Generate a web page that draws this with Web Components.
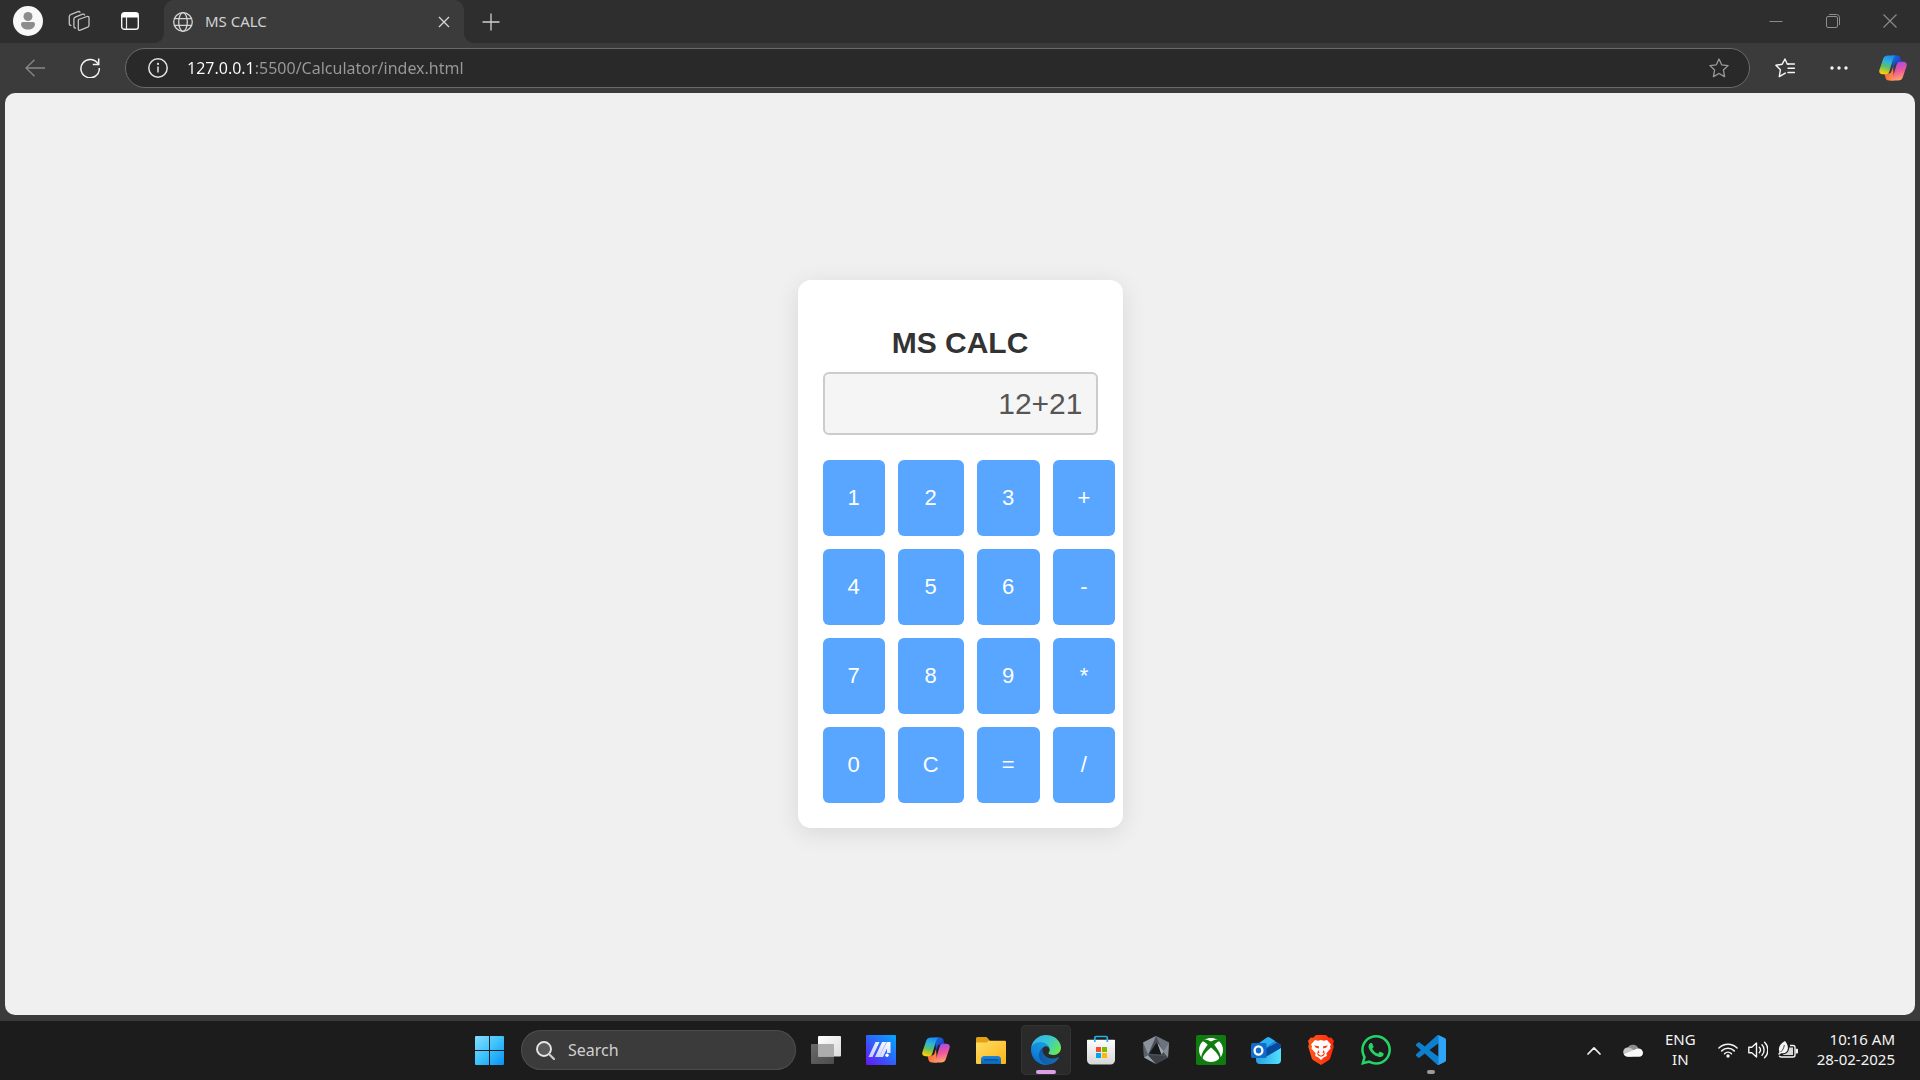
<!DOCTYPE html>
<html lang="en">
<head>
<meta charset="utf-8">
<meta name="viewport" content="width=device-width, initial-scale=1">
<title>MS CALC</title>
<style>
  html, body { margin: 0; background: #1c1c1c; }
  body { font-family: "Noto Sans", "Open Sans", sans-serif; font-size: 15px; }
</style>
</head>
<body>
<desktop-screen>
  <tab-strip slot="tabs"></tab-strip>
  <tool-bar slot="toolbar" host="127.0.0.1" path=":5500/Calculator/index.html"></tool-bar>
  <calc-app slot="page" heading="MS CALC" value="12+21"></calc-app>
  <task-bar slot="taskbar"></task-bar>
</desktop-screen>

<script>
const COPILOT = `
  <defs>
    <linearGradient id="l" x1=".6" y1="0" x2=".35" y2="1"><stop offset="0" stop-color="#1a8df0"/><stop offset=".35" stop-color="#2fb4d8"/><stop offset=".62" stop-color="#5fbf6a"/><stop offset="1" stop-color="#ffd000"/></linearGradient>
    <linearGradient id="r" x1=".6" y1="1" x2=".35" y2="0"><stop offset="0" stop-color="#a04af0"/><stop offset=".5" stop-color="#f0569a"/><stop offset="1" stop-color="#ffad60"/></linearGradient>
    <linearGradient id="b" x1="0" y1="0" x2="1" y2="1"><stop offset="0" stop-color="#1a6fe0"/><stop offset="1" stop-color="#1530b8"/></linearGradient>
    <linearGradient id="o" x1="0" y1="0" x2="1" y2="1"><stop offset="0" stop-color="#f0503c"/><stop offset="1" stop-color="#ff9a4a"/></linearGradient>
  </defs>
  <path fill="url(#b)" d="M13 .5h5.200c1.800 0 2.800 1 3.300 2.800l1.200 4.200h-4.200c-1.500 0-2.500.8-3 2.200L14 14z"/>
  <path fill="url(#o)" d="M15 25.500H9.800c-1.800 0-2.800-1-3.300-2.800l-1.200-4.200h4.200c1.500 0 2.500-.8 3-2.200L14 12z"/>
  <path fill="url(#l)" d="M9 .5h8.500c-1.800.2-2.700 1.200-3.200 2.800L10.500 16c-.7 2.200-1.600 3.200-3.700 3.200H3.500C.8 19.200-.2 17.500.4 15L4.200 3.800C5 1.500 6.500.5 9 .5z"/>
  <path fill="url(#r)" transform="rotate(180 14 13)" d="M9 .5h8.500c-1.800.2-2.700 1.200-3.200 2.800L10.500 16c-.7 2.200-1.600 3.200-3.700 3.200H3.500C.8 19.200-.2 17.500.4 15L4.200 3.800C5 1.500 6.500.5 9 .5z"/>`;

/* name: [width, height, viewBox, markup] */
const ICONS = {
  avatar: [30, 30, '0 0 30 30', `<circle cx="15" cy="15" r="15" fill="#f8f8f8"/><circle cx="15" cy="10.500" r="4.500" fill="#8c8c8c"/><path d="M10 16h10a2 2 0 0 1 2 2c0 3.500-3 5.500-7 5.500s-7-2-7-5.500a2 2 0 0 1 2-2z" fill="#8c8c8c"/>`],
  workspaces: [22, 22, '0 0 22 22', `<g fill="none" stroke="#c4c4c4" stroke-width="1.300" stroke-linejoin="round" stroke-linecap="round"><path d="M10.500 9.500l8.500-3c1.200-.4 2 .2 2 1.300v7.400c0 1-.4 1.600-1.300 2l-7.400 3c-1.200.4-2-.2-2-1.300v-7.400c0-1 0-1.500.2-2z"/><path d="M7.500 18c-1 0-1.600-.6-1.600-1.600V9.200c0-1 .4-1.600 1.300-2l7.400-3c1-.4 1.700 0 2 .8"/><path d="M3 15.300c-1 0-1.700-.5-1.700-1.600V6.700c0-1 .4-1.700 1.300-2l7.400-3c1-.4 1.600-.1 2 .6"/></g>`],
  tabmenu: [18, 18, '0 0 18 18', `<rect x=".7" y=".7" width="16.600" height="16.600" rx="2.600" fill="none" stroke="#f4f4f4" stroke-width="1.400"/><path d="M1 5.500V3a2.300 2.300 0 0 1 2.300-2.300h11.400A2.300 2.300 0 0 1 17 3v2.500z" fill="#fff"/><path d="M5.500 5v12" stroke="#e8e8e8" stroke-width="1.200"/>`],
  globe: [20, 20, '0 0 20 20', `<g fill="none" stroke="#d4d4d4" stroke-width="1.300"><circle cx="10" cy="10" r="9.300"/><ellipse cx="10" cy="10" rx="4.300" ry="9.300"/><path d="M1.500 6.700h17M1.500 13.300h17"/></g>`],
  x: [12, 12, '0 0 12 12', `<path d="M1 1l10 10M11 1L1 11" stroke="#d8d8d8" stroke-width="1.300" fill="none"/>`],
  plus: [18, 18, '0 0 18 18', `<path d="M9 .5v17M.5 9h17" stroke="#cfcfcf" stroke-width="1.300" fill="none"/>`],
  min: [14, 14, '0 0 14 14', `<path d="M.5 7.500h13" stroke="#8a8a8a"/>`],
  restore: [14, 14, '0 0 14 14', `<g fill="none" stroke="#8e8e8e"><rect x=".5" y="2.500" width="11" height="11" rx="1.500"/><path d="M3 .5h7.500a3 3 0 0 1 3 3V11"/></g>`],
  close: [14, 14, '0 0 14 14', `<path d="M.5 .5l13 13M13.500 .5l-13 13" stroke="#8e8e8e" stroke-width="1.100" fill="none"/>`],
  back: [20, 18, '0 0 20 18', `<path d="M9.500 .7L1 9l8.500 8.300M1 9h19" fill="none" stroke="#888" stroke-width="1.300"/>`],
  reload: [20, 20, '0 0 20 20', `<path d="M18.200 6.200A9.200 9.200 0 1 0 19.300 10" fill="none" stroke="#f4f4f4" stroke-width="1.500"/><path d="M18.700 .5v5.900h-5.900" fill="none" stroke="#f4f4f4" stroke-width="1.500"/>`],
  info: [20, 20, '0 0 20 20', `<circle cx="10" cy="10" r="9.200" fill="none" stroke="#e4e4e4" stroke-width="1.500"/><path d="M10 8.500v6" stroke="#e4e4e4" stroke-width="1.500"/><circle cx="10" cy="5.900" r="1.100" fill="#e4e4e4"/>`],
  star: [20, 20, '0 0 20 20', `<path d="M10 1l2.700 5.800 6.400.8-4.700 4.400 1.200 6.600L10 15.500l-5.600 3.100L5.600 12 .9 7.600l6.400-.8z" fill="none" stroke="#9a9a9a" stroke-width="1.300" stroke-linejoin="round"/>`],
  favs: [20, 20, '0 0 20 20', `<g fill="none" stroke="#f6f6f6" stroke-width="1.400" stroke-linejoin="round" stroke-linecap="round"><path d="M13.500 6.200L12.200 6 10 1 7.200 6.200.9 7.300l4.500 4.400-1.100 6.900 6-3.500"/><path d="M13 6h6.500M13 10.300h6.500M13 14.500h6.500"/></g>`],
  dots: [18, 4, '0 0 18 4', `<g fill="#f4f4f4"><circle cx="2" cy="2" r="1.700"/><circle cx="9" cy="2" r="1.700"/><circle cx="16" cy="2" r="1.700"/></g>`],
  copilot: [28, 26, '0 0 28 26', COPILOT],
  windows: [29, 29, '0 0 29 29', `<defs><linearGradient id="w" x1="0" y1="0" x2="29" y2="29" gradientUnits="userSpaceOnUse"><stop offset="0" stop-color="#86dcff"/><stop offset=".5" stop-color="#3cc2fb"/><stop offset="1" stop-color="#0a90f5"/></linearGradient></defs><path fill="url(#w)" d="M1 0h13v14H0V1a1 1 0 0 1 1-1zM15 0h13a1 1 0 0 1 1 1v13H15zM0 15h14v14H1a1 1 0 0 1-1-1zM15 15h14v13a1 1 0 0 1-1 1H15z"/>`],
  search: [19, 19, '0 0 19 19', `<circle cx="8" cy="8" r="7" fill="#5a5a5a" stroke="#e6e6e6" stroke-width="1.900"/><path d="M13 13l5 5" stroke="#cfcfcf" stroke-width="2.200" stroke-linecap="round"/>`],
  taskview: [30, 28, '0 0 30 28', `<defs><linearGradient id="a" x2="1" y2="1"><stop stop-color="#6a6a6a"/><stop offset="1" stop-color="#4c4c4c"/></linearGradient><linearGradient id="c" x2="1" y2="1"><stop stop-color="#fff"/><stop offset="1" stop-color="#dcdcdc"/></linearGradient></defs><rect y="8" width="23" height="20" rx="1" fill="url(#a)"/><rect x="7" width="23" height="20.500" rx="1" fill="url(#c)"/><path d="M7 8h16v12.500H7z" fill="#adadad"/>`],
  myasus: [30, 30, '0 0 30 30', `<defs><linearGradient id="m" x1="0" y1="1" x2="1" y2="0"><stop stop-color="#6a14f4"/><stop offset=".5" stop-color="#2f62fb"/><stop offset="1" stop-color="#04a8ff"/></linearGradient><linearGradient id="n" x1="1" y1="0" x2="0" y2="1"><stop stop-color="#fff"/><stop offset="1" stop-color="#c4c8ff"/></linearGradient></defs><rect width="30" height="30" rx="1" fill="url(#m)"/><path fill="url(#n)" d="M9.500 7h4L6.500 22h-4zM16 7h4.500L13 22H9zM21 7h3.500v11H21v-4.500L17 22h-4z"/><circle cx="21" cy="20.300" r="1.700" fill="#fff"/>`],
  explorer: [30, 27, '0 0 30 27', `<defs><linearGradient id="f" x2="1" y2="1"><stop stop-color="#ffdc66"/><stop offset="1" stop-color="#fbb516"/></linearGradient><linearGradient id="g" x2="0" y2="1"><stop stop-color="#1c86dc"/><stop offset="1" stop-color="#0a66b8"/></linearGradient></defs><path d="M0 1.500A1.500 1.500 0 0 1 1.500 0h8.300c.8 0 1.300.3 1.800.9L14 4v4H0z" fill="#e2a210"/><path d="M0 5.500h10c1 0 1.500-.4 2-1l.6-.8H29a1 1 0 0 1 1 1V26a1 1 0 0 1-1 1H1a1 1 0 0 1-1-1z" fill="url(#f)"/><path d="M5 27v-4.500A3.500 3.500 0 0 1 8.500 19h13a3.500 3.500 0 0 1 3.500 3.500V27z" fill="url(#g)"/><path d="M8.500 22.800h13" stroke="#0a4c8c" stroke-width="1.300" stroke-linecap="round"/>`],
  edge: [30, 30, '0 0 256 256', `<defs><linearGradient id="e1" x1="0" x2="1"><stop stop-color="#0c59a4"/><stop offset="1" stop-color="#1670b8"/></linearGradient><linearGradient id="e2" x1=".7" y1="0" x2=".2" y2="1"><stop stop-color="#1b9de2"/><stop offset=".5" stop-color="#1288dc"/><stop offset="1" stop-color="#0668c4"/></linearGradient><linearGradient id="e3" x1="0" y1=".2" x2="1" y2=".7"><stop stop-color="#2fb2e8"/><stop offset=".5" stop-color="#38c8d0"/><stop offset="1" stop-color="#6ae850"/></linearGradient></defs><path fill="url(#e1)" d="M231.070 190.540c-3.400 1.800-6.900 3.350-10.530 4.700a101.150 101.150 0 0 1-35.460 6.340c-46.730 0-87.440-32.140-87.440-73.390a31.100 31.100 0 0 1 16.230-27.100c-42.260 1.770-53.120 45.800-53.120 71.600 0 72.940 67.230 80.340 81.710 80.340 7.810 0 19.590-2.270 26.660-4.500l1.290-.44a128.340 128.340 0 0 0 66.600-52.800 4 4 0 0 0-5.940-4.750z"/><path fill="url(#e2)" d="M105.730 241.420A79.200 79.200 0 0 1 83 220.080a80.720 80.720 0 0 1 29.500-119.960c3.120-1.470 8.450-4.120 15.540-4a32.350 32.350 0 0 1 25.690 13 31.880 31.880 0 0 1 6.360 18.660c0-.21 24.460-79.600-80-79.600-43.900 0-80 41.660-80 78.200a130.140 130.140 0 0 0 12.110 56 128 128 0 0 0 156.380 67.100 75.550 75.550 0 0 1-62.780-8.060z"/><path fill="url(#e3)" d="M152.330 148.860c-.81 1.050-3.300 2.500-3.300 5.660 0 2.610 1.700 5.120 4.720 7.230 14.380 10 41.490 8.680 41.560 8.680a59.560 59.560 0 0 0 30.270-8.350A61.380 61.380 0 0 0 256 109.200c.26-22.410-8-37.310-11.340-43.910C223.460 23.840 177.720 0 128 0A128 128 0 0 0 0 126.200c.48-36.540 36.800-66.050 80-66.050 3.500 0 23.460.34 42 10.070 16.340 8.580 24.900 18.940 30.850 29.210 6.180 10.670 7.280 24.150 7.280 29.520 0 5.370-2.740 13.330-7.800 19.910z"/>`],
  store: [30, 30, '0 0 30 30', `<defs><linearGradient id="s" x2="0" y2="1"><stop stop-color="#fdfdfd"/><stop offset="1" stop-color="#d6d6d6"/></linearGradient></defs><path d="M1 5.500a.8.800 0 0 1 .8-.8h26.400a.8.800 0 0 1 .8.800V25a4.500 4.500 0 0 1-4.500 4.500h-19A4.500 4.500 0 0 1 1 25z" fill="url(#s)"/><path d="M8.800 7V2.800A1.300 1.300 0 0 1 10 1.500h10a1.300 1.300 0 0 1 1.300 1.300V7" fill="none" stroke="#22b4e8" stroke-width="1.700"/><path fill="#f25022" d="M10 12h5v5h-5z"/><path fill="#7fba00" d="M16 12h5v5h-5z"/><path fill="#00a4ef" d="M10 18h5v5h-5z"/><path fill="#ffb900" d="M16 18h5v5h-5z"/>`],
  armoury: [26, 28, '0 0 26 28', `<path d="M13 0l13 6.500-1 15L13 28 1 21.500 0 6.500z" fill="#4b5058"/><path d="M13 0L0 6.500 5 19z" fill="#8c939c"/><path d="M13 0l13 6.500-6 9z" fill="#6c737c"/><path d="M26 6.500l-1 15-5-6z" fill="#878d96"/><path d="M0 6.500l1 15L5 19z" fill="#5b616a"/><path d="M5 19l8 9L1 21.500z" fill="#9aa0a8"/><path d="M5 19l19 1.500L13 28z" fill="#3c4047"/><path d="M14 6l4.500 12.500L6 17.800z" fill="#17181c"/><path d="M14 6l6.500 9.500-2 3z" fill="#a4abb4"/>`],
  xbox: [30, 30, '0 0 30 30', `<rect width="30" height="30" rx="2" fill="#107c10"/><path fill="#fff" transform="translate(3 3)" d="M4.102 21.033C6.211 22.881 8.977 24 12 24c3.026 0 5.789-1.119 7.902-2.967 1.877-1.912-4.316-8.709-7.902-11.417-3.582 2.708-9.779 9.505-7.898 11.417zm11.160-14.406c2.500 2.961 7.484 10.313 6.076 12.912C23.002 17.480 24 14.861 24 12.004c0-3.340-1.365-6.362-3.570-8.536 0 0-.027-.022-.082-.042-.063-.022-.152-.045-.281-.045-.592 0-1.985.434-4.805 3.246zM3.654 3.426c-.057.020-.082.041-.086.042C1.365 5.642 0 8.664 0 12.004c0 2.854.998 5.473 2.661 7.533-1.401-2.605 3.579-9.951 6.080-12.910-2.820-2.813-4.216-3.245-4.806-3.245-.131 0-.223.021-.281.046v-.002zM12 3.551S9.055 1.828 6.755 1.746c-.903-.033-1.454.295-1.521.339C7.379.646 9.659 0 11.984 0H12c2.334 0 4.605.646 6.766 2.085-.068-.046-.615-.372-1.520-.339C14.946 1.828 12 3.545 12 3.545v.006z"/>`],
  outlook: [30, 27, '0 0 30 27', `<defs><linearGradient id="k" x1="0" x2="1"><stop stop-color="#2a9fe0"/><stop offset="1" stop-color="#50e0ff"/></linearGradient></defs><path d="M5 9L16 .6a2.500 2.500 0 0 1 2.600 0L30 8v12H5z" fill="#1a86dc"/><path d="M8 6L16 .6a2.500 2.500 0 0 1 2.600 0L24 4 14 11z" fill="#2cb0f0"/><path d="M12 13L26.500 5.500 30 8.500v3l-14 9z" fill="#0a489c"/><path d="M5 19v4a4 4 0 0 0 4 4h17a4 4 0 0 0 4-4V11L13 21z" fill="url(#k)"/><rect y="6" width="15.500" height="15" rx="1.500" fill="#0f6cc8"/><ellipse cx="7.500" cy="13.500" rx="3.900" ry="4.200" fill="none" stroke="#fff" stroke-width="2.300"/>`],
  brave: [26, 30, '0 0 26 30', `<defs><linearGradient id="v" x2="1"><stop stop-color="#ff5a1c"/><stop offset="1" stop-color="#ff2608"/></linearGradient></defs><path fill="url(#v)" d="M8 0h10l2.800 2.700 2.500-.3L26 6l-1 3 .8 2.500-3.300 11c-.4 1.400-1.200 2.300-2.300 3L13 30l-7.200-4.500c-1.100-.7-1.900-1.600-2.300-3L.2 11.500 1 9 0 6l2.700-3.600 2.500.3z"/><path fill="#fff" d="M7 5l3 .8L13 5l3 .8L19 5l4 4.500-1 2 .6 2-4.200 4.800.4 2.700-3.300 1.500L13 25l-2.500-2.500L7.200 21l.4-2.700-4.200-4.800.6-2-1-2z"/><path fill="#fb3c12" d="M6 10.500l5 .7-.2 2.300L8 12.800zM20 10.500l-5 .7.200 2.300 2.800-.7zM10.200 15l1.300 2.500-1.600 1.200 3.100 2 3.100-2-1.600-1.200 1.300-2.500 1 3.400-.8 2.200-3 1.200-3-1.200-.8-2.200z"/>`],
  whatsapp: [30, 30, '0 0 24 24', `<path fill="#25d366" d="M17.472 14.382c-.297-.149-1.758-.867-2.030-.967-.273-.099-.471-.148-.670.150-.197.297-.767.966-.940 1.164-.173.199-.347.223-.644.075-.297-.150-1.255-.463-2.390-1.475-.883-.788-1.480-1.761-1.653-2.059-.173-.297-.018-.458.130-.606.134-.133.298-.347.446-.520.149-.174.198-.298.298-.497.099-.198.050-.371-.025-.520-.075-.149-.669-1.612-.916-2.207-.242-.579-.487-.5-.669-.510-.173-.008-.371-.010-.570-.010-.198 0-.520.074-.792.372-.272.297-1.040 1.016-1.040 2.479 0 1.462 1.065 2.875 1.213 3.074.149.198 2.096 3.200 5.077 4.487.709.306 1.262.489 1.694.625.712.227 1.360.195 1.871.118.571-.085 1.758-.719 2.006-1.413.248-.694.248-1.289.173-1.413-.074-.124-.272-.198-.570-.347m-5.421 7.403h-.004a9.870 9.870 0 0 1-5.031-1.378l-.361-.214-3.741.982.998-3.648-.235-.374a9.860 9.860 0 0 1-1.510-5.260c.001-5.450 4.436-9.884 9.888-9.884 2.640 0 5.122 1.030 6.988 2.898a9.825 9.825 0 0 1 2.893 6.994c-.003 5.450-4.437 9.884-9.885 9.884m8.413-18.297A11.815 11.815 0 0 0 12.050 0C5.495 0 .160 5.335.157 11.892c0 2.096.547 4.142 1.588 5.945L.057 24l6.305-1.654a11.882 11.882 0 0 0 5.683 1.448h.005c6.554 0 11.890-5.335 11.893-11.893a11.821 11.821 0 0 0-3.480-8.413z"/>`],
  vscode: [30, 30, '0 0 24 24', `<path fill="#0c7fce" d="M23.150 2.587L18.210.210a1.494 1.494 0 0 0-1.705.290l-9.460 8.630-4.120-3.128a.999.999 0 0 0-1.276.057L.327 7.261A1 1 0 0 0 .326 8.740L3.899 12 .326 15.260a1 1 0 0 0 .001 1.479L1.650 17.940a.999.999 0 0 0 1.276.057l4.120-3.128 9.460 8.630a1.492 1.492 0 0 0 1.704.290l4.942-2.377A1.500 1.500 0 0 0 24 20.060V3.939a1.500 1.500 0 0 0-.850-1.352zm-5.146 14.861L10.826 12l7.178-5.448v10.896z"/><path fill="#2fa4f4" d="M18 .1l5.150 2.487A1.500 1.500 0 0 1 24 3.939V20.060a1.500 1.500 0 0 1-.850 1.352L18 23.900z"/>`],
  chevron: [14, 9, '0 0 14 9', `<path d="M1 8l6-6.200L13 8" fill="none" stroke="#f0f0f0" stroke-width="1.700" stroke-linecap="round" stroke-linejoin="round"/>`],
  cloud: [20, 14, '0 0 20 14', `<path d="M4.500 5A6 6 0 0 1 15.500 5.500L10 9z" fill="#8e8e8e"/><path d="M4.700 13.500A4.500 4.500 0 0 1 4.700 4.500c2 0 3 .7 4.500 1.600L13 9l-4 4.500z" fill="#c8c8c8"/><path d="M20 10a4 4 0 0 1-4 3.700H5c-2 0-3.400-1-4.200-2.500L12 6.500c1.300-.7 2.300-1 3.500-1A4.500 4.500 0 0 1 20 10z" fill="#fafafa"/>`],
  wifi: [20, 16, '0 0 20 16', `<g fill="none" stroke="#f4f4f4" stroke-width="1.500" stroke-linecap="round"><path d="M.9 6a12.800 12.800 0 0 1 18.200 0"/><path d="M3.700 8.900a8.900 8.900 0 0 1 12.600 0"/><path d="M6.500 11.700a5 5 0 0 1 7 0"/></g><circle cx="10" cy="14" r="1.700" fill="#f4f4f4"/>`],
  volume: [20, 18, '0 0 20 18', `<g fill="none" stroke="#f4f4f4" stroke-width="1.400" stroke-linecap="round" stroke-linejoin="round"><path d="M.8 6.200h3L8.500 2v14l-4.700-4.200h-3z"/><path d="M11.300 6.300a4 4 0 0 1 0 5.400M14 3.800a7.500 7.500 0 0 1 0 10.400M16.600 1.200a11 11 0 0 1 0 15.600"/></g>`],
  battery: [20, 18, '0 0 20 18', `<g fill="none" stroke="#f4f4f4" stroke-width="1.400"><path d="M12 4.500h3a2 2 0 0 1 2 2V14a2 2 0 0 1-2 2H3a2 2 0 0 1-1.800-1.200"/></g><path d="M17.700 7.800h1.500a.8.800 0 0 1 .8.800v3.200a.8.800 0 0 1-.8.800h-1.500z" fill="#f4f4f4"/><path d="M7 0c2 2.500 3.300 5 2.800 8-.5 2.400-2 4.200-4.700 4.200H3L1 14l-.8-1L1.500 11C-.3 7 1.800 2.800 7 0z" fill="#f4f4f4"/><path d="M11.200 6.500h3.800V14H5l.5-.8C9 13 11 10.500 11.200 6.500z" fill="#d8d8d8"/><path d="M6.300 4C6 7 4.700 9.200 2.600 11" stroke="#1c1c1c" stroke-width=".8" fill="none"/>`]
};

/* Base class: clones a template with the element's styles and markup into an open root. */
class Base extends HTMLElement {
  constructor() {
    super();
    this.attachShadow({ mode: 'open' });
  }
  connectedCallback() {
    if (this.shadowRoot.childNodes.length) return;
    const t = document.createElement('template');
    t.innerHTML = `<style>
      :host, *, *::before, *::after { box-sizing: border-box; }
      button { margin: 0; padding: 0; border: 0; background: none; color: inherit; font: inherit; cursor: pointer; }
      button:focus-visible, input:focus-visible { outline: 2px solid #7ab8ff; }
      ${this.styles()}</style>${this.render()}`;
    this.shadowRoot.append(t.content.cloneNode(true));
    this.ready();
  }
  styles() { return ''; }
  render() { return ''; }
  ready() {}
}

customElements.define('ui-icon', class extends Base {
  styles() { return ':host { display: block; flex: none; } svg { display: block; }'; }
  render() {
    const [w, h, box, art] = ICONS[this.getAttribute('name')];
    return `<svg width="${w}" height="${h}" viewBox="${box}" aria-hidden="true">${art}</svg>`;
  }
});

customElements.define('icon-button', class extends Base {
  styles() {
    return `
      :host { display: block; flex: none; width: var(--slot, 50px); height: 100%; }
      button { width: 100%; height: 100%; display: flex; align-items: center; justify-content: center; }`;
  }
  render() {
    return `<button type="button" aria-label="${this.getAttribute('label')}"><ui-icon name="${this.getAttribute('icon')}"></ui-icon></button>`;
  }
});

customElements.define('browser-tab', class extends Base {
  styles() {
    return `
      :host { display: flex; align-items: center; gap: 12px; position: relative; width: 300px; height: 100%;
        padding: 0 14px 0 9px; background: #3b3b3b; border-radius: 10px 10px 0 0; color: #d2d2d2; line-height: 20px; }
      :host::before, :host::after { content: ""; position: absolute; bottom: 0; width: 10px; height: 10px; }
      :host::before { right: 100%; background: radial-gradient(circle at 0 0, transparent 10px, #3b3b3b 10px); }
      :host::after { left: 100%; background: radial-gradient(circle at 100% 0, transparent 10px, #3b3b3b 10px); }
      .title { flex: 1; padding-bottom: 2px; }
      icon-button { --slot: 12px; }`;
  }
  render() {
    return `<ui-icon name="globe"></ui-icon><span class="title"><slot></slot></span><icon-button icon="x" label="Close tab"></icon-button>`;
  }
});

customElements.define('tab-strip', class extends Base {
  styles() {
    return `
      :host { display: flex; height: 43px; background: #2e2e2e; padding-left: 3px; }
      .left { display: flex; gap: 1px; margin-right: 9px; padding-bottom: 1px; }
      .new { margin-left: 2px; }
      .window { display: flex; margin: 0 2px 0 auto; padding-bottom: 1px; --slot: 57px; }`;
  }
  render() {
    return `
      <div class="left">
        <icon-button icon="avatar" label="Profile"></icon-button>
        <icon-button icon="workspaces" label="Workspaces"></icon-button>
        <icon-button icon="tabmenu" label="Tab actions"></icon-button>
      </div>
      <browser-tab>MS CALC</browser-tab>
      <icon-button class="new" icon="plus" label="New tab"></icon-button>
      <div class="window">
        <icon-button icon="min" label="Minimize"></icon-button>
        <icon-button icon="restore" label="Restore"></icon-button>
        <icon-button icon="close" label="Close"></icon-button>
      </div>`;
  }
});

customElements.define('tool-bar', class extends Base {
  styles() {
    return `
      :host { display: flex; align-items: center; height: 50px; padding-left: 7px; }
      .nav { display: flex; height: 100%; --slot: 55px; }
      .nav.end { --slot: 54px; }
      .address { flex: 1; display: flex; align-items: center; height: 40px; margin: 0 8px; padding: 0 20px 0 22px;
        border: 1px solid #6a6a6a; border-radius: 20px; background: #292929; }
      .address icon-button { --slot: 20px; }
      input { flex: 1; min-width: 0; height: 28px; margin: 0 19px; padding: 0; border: 0; outline: 0;
        font: 16px/28px "Noto Sans", "Open Sans", sans-serif; color: transparent; caret-color: #fff;
        background: linear-gradient(90deg, #fff var(--split, 0), #9a9a9a var(--split, 0)); -webkit-background-clip: text; background-clip: text; }`;
  }
  render() {
    return `
      <div class="nav">
        <icon-button icon="back" label="Back"></icon-button>
        <icon-button icon="reload" label="Refresh"></icon-button>
      </div>
      <div class="address">
        <icon-button icon="info" label="View site information"></icon-button>
        <input type="text" aria-label="Address and search bar" spellcheck="false" value="${this.getAttribute('host')}${this.getAttribute('path')}">
        <icon-button icon="star" label="Add to favorites"></icon-button>
      </div>
      <div class="nav end">
        <icon-button icon="favs" label="Favorites"></icon-button>
        <icon-button icon="dots" label="Settings and more"></icon-button>
        <icon-button icon="copilot" label="Copilot"></icon-button>
      </div>`;
  }
  ready() {
    /* The host part of the address is brighter than the rest. */
    const input = this.shadowRoot.querySelector('input');
    const pen = document.createElement('canvas').getContext('2d');
    pen.font = '16px "Noto Sans"';
    input.style.setProperty('--split', Math.round(pen.measureText(this.getAttribute('host')).width) + 'px');
  }
});

customElements.define('calc-app', class extends Base {
  styles() {
    return `
      :host { display: block; font-family: "Liberation Sans", Arial, sans-serif; }
      .card { width: 325px; padding: 25px; border-radius: 13px; background: #fff; box-shadow: 0 5px 25px rgba(0, 0, 0, .1); }
      h1 { margin: 20px 0 12px; font-size: 30px; line-height: 35px; text-align: center; color: #333; }
      input { display: block; width: 100%; height: 63px; margin: 0 0 25px; padding: 0 13px; border: 2px solid #ccc; border-radius: 6px;
        background: #f5f5f5; color: #555; font: 30px "Liberation Sans", Arial, sans-serif; text-align: right; }
      .keys { display: grid; grid-template-columns: repeat(4, auto); justify-content: start; gap: 13px; }
      .keys button { padding: 25px; border-radius: 6px; background: #58a6ff; color: #fff; font-size: 22px; line-height: 26px; }`;
  }
  render() {
    const keys = ['1', '2', '3', '+', '4', '5', '6', '-', '7', '8', '9', '*', '0', 'C', '=', '/'];
    return `
      <div class="card">
        <h1>${this.getAttribute('heading')}</h1>
        <input type="text" aria-label="Display" readonly value="${this.getAttribute('value')}">
        <div class="keys">${keys.map(k => `<button type="button">${k}</button>`).join('')}</div>
      </div>`;
  }
  ready() {
    const out = this.shadowRoot.querySelector('input');
    this.shadowRoot.querySelector('.keys').addEventListener('click', e => {
      const key = e.target.closest('button')?.textContent;
      if (!key) return;
      if (key === 'C') out.value = '';
      else if (key === '=') {
        try { out.value = Function(`return (${out.value})`)(); } catch { out.value = 'Error'; }
      } else out.value += key;
    });
  }
});

customElements.define('task-item', class extends Base {
  styles() {
    return `
      :host { display: block; position: relative; width: var(--slot, 50px); height: 50px; border-radius: 5px; }
      :host([state="active"]) { background: #2a2a2a; box-shadow: inset 0 0 0 1px #343434; }
      :host([state])::after { content: ""; position: absolute; left: 0; right: 0; bottom: 1px; width: 8px; height: 4px; margin: auto; border-radius: 2px; background: #9a9a9a; }
      :host([state="active"])::after { width: 20px; background: #dca0e4; }`;
  }
  render() {
    return `<icon-button icon="${this.getAttribute('icon')}" label="${this.getAttribute('label')}"></icon-button>`;
  }
});

customElements.define('task-bar', class extends Base {
  styles() {
    return `
      :host { display: grid; grid-template-columns: 1fr auto 1fr; align-items: center; height: 59px; padding: 0 2px 1px 0; background: #1c1c1c; color: #f4f4f4; line-height: 20px; }
      .apps { grid-column: 2; display: flex; align-items: center; gap: 5px; }
      .start { --slot: 54px; }
      .search { display: flex; align-items: center; gap: 13px; width: 275px; height: 40px; padding: 0 15px; border-radius: 20px;
        background: #3b3b3b; box-shadow: inset 0 0 0 1px #4c4c4c; }
      .search input { flex: 1; min-width: 0; padding: 0; border: 0; outline: 0; background: none; color: #d0d0d0; font: 16px/24px "Noto Sans", "Open Sans", sans-serif; }
      .search input::placeholder { color: #d0d0d0; opacity: 1; }
      .tray { display: flex; justify-content: flex-end; align-items: center; gap: 22px; padding-right: 23px; --slot: auto; }
      .tray button { display: flex; align-items: center; gap: 10px; }
      .status { display: flex; align-items: center; gap: 19px; }
      .tray .lang, .tray .clock { display: block; padding-bottom: 2px; text-align: center; }
      .tray .clock { text-align: right; }`;
  }
  render() {
    const apps = [['taskview', 'Task view'], ['myasus', 'MyASUS'], ['copilot', 'Copilot'], ['explorer', 'File Explorer'],
      ['edge', 'Microsoft Edge', 'active'], ['store', 'Microsoft Store'], ['armoury', 'Armoury Crate'], ['xbox', 'Xbox'],
      ['outlook', 'Outlook'], ['brave', 'Brave'], ['whatsapp', 'WhatsApp'], ['vscode', 'Visual Studio Code', 'open']];
    return `
      <div class="apps">
        <task-item class="start" icon="windows" label="Start"></task-item>
        <label class="search"><ui-icon name="search"></ui-icon><input type="text" placeholder="Search" aria-label="Search"></label>
        ${apps.map(([i, l, s]) => `<task-item icon="${i}" label="${l}"${s ? ` state="${s}"` : ''}></task-item>`).join('')}
      </div>
      <div class="tray">
        <button type="button" aria-label="Show hidden icons"><ui-icon name="chevron"></ui-icon></button>
        <button type="button" aria-label="OneDrive"><ui-icon name="cloud"></ui-icon></button>
        <button type="button" class="lang">ENG<br>IN</button>
        <div class="status">
          <button type="button" aria-label="Network, volume and battery"><ui-icon name="wifi"></ui-icon><ui-icon name="volume"></ui-icon><ui-icon name="battery"></ui-icon></button>
          <button type="button" class="clock">10:16 AM<br>28-02-2025</button>
        </div>
      </div>`;
  }
});

customElements.define('desktop-screen', class extends Base {
  styles() {
    return `
      :host { display: flex; flex-direction: column; min-height: 100vh; background: #3b3b3b; }
      main { flex: 1; display: flex; align-items: center; justify-content: center; margin: 0 5px 6px; padding: 20px; border-radius: 10px; background: #f0f0f0; }`;
  }
  render() {
    return `<slot name="tabs"></slot><slot name="toolbar"></slot><main><slot name="page"></slot></main><slot name="taskbar"></slot>`;
  }
});
</script>
</body>
</html>
